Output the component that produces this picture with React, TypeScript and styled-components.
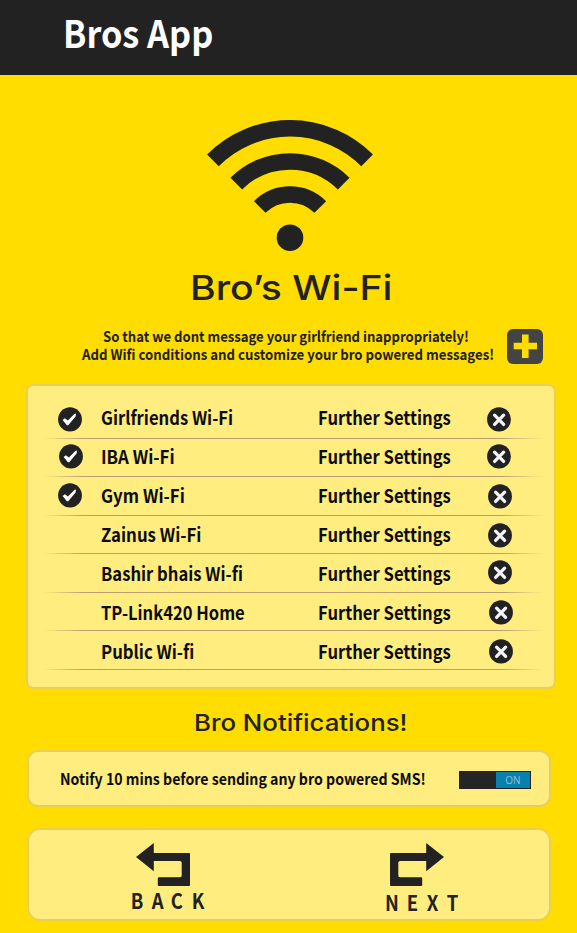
import React, { useLayoutEffect, useRef, useState } from "react";
import styled, { createGlobalStyle } from "styled-components";

const ink = "#222222";
const humanist = `"Noto Sans CJK JP", "Noto Sans", sans-serif`;

const GlobalStyle = createGlobalStyle`
  * { box-sizing: border-box; }
  html, body { margin: 0; padding: 0; }
  body { background: #ffdd00; color: ${ink}; font-family: ${humanist}; font-weight: 700; }
`;

const Screen = styled.div`
  width: 577px;
  height: 933px;
  overflow: hidden;
  background: #ffdd00;
  display: flex;
  flex-direction: column;
`;

const FitBox = styled.span<{ $width: number }>`
  display: block;
  width: ${(p) => p.$width}px;
  white-space: nowrap;
`;

const FitText = styled.span`
  display: inline-block;
  vertical-align: top;
  transform-origin: 0 50%;
`;

/* Condenses or widens its text to fill a set width. */
function Fit({ width, children }: { width: number; children: React.ReactNode }) {
  const ref = useRef<HTMLSpanElement>(null);
  const [scale, setScale] = useState(1);
  useLayoutEffect(() => {
    if (ref.current) setScale(width / ref.current.offsetWidth);
  }, [width]);
  return (
    <FitBox $width={width}>
      <FitText ref={ref} style={{ transform: `scaleX(${scale})` }}>
        {children}
      </FitText>
    </FitBox>
  );
}

const Header = styled.header`
  height: 75px;
  flex: none;
  background: ${ink};
  padding: 0 0 0 63px;
`;

const AppTitle = styled.h1`
  margin: 0;
  color: #fff;
  font-size: 38px;
  line-height: 63px;
`;

const Hero = styled.section`
  flex: none;
  height: 309px;
  padding-top: 43px;
  display: flex;
  flex-direction: column;
`;

const WifiIcon = styled.svg`
  display: block;
  flex: none;
  width: 170px;
  height: 136px;
  margin-left: 205px;
`;

const Heading = styled.h2<{ $size: number; $line: number; $left: number; $top?: number }>`
  margin: 0 0 0 ${(p) => p.$left}px;
  padding-top: ${(p) => p.$top ?? 0}px;
  font-family: Inter, sans-serif;
  font-weight: 500;
  font-size: ${(p) => p.$size}px;
  line-height: ${(p) => p.$line}px;
`;

const Intro = styled.div`
  display: flex;
  margin-top: 5px;
`;

const IntroText = styled.div`
  width: 507px;
  padding-left: 82px;
  display: flex;
  flex-direction: column;
  font-size: 14.5px;
  line-height: 18px;
`;

const FirstLine = styled.div`
  padding-left: 21px;
`;

const AddButton = styled.button`
  width: 36px;
  height: 35px;
  margin-top: 2px;
  padding: 0;
  border: 0;
  border-radius: 6px;
  background: #444444;
  svg { display: block; }
`;

const Panel = styled.section<{ $radius: number }>`
  flex: none;
  background: #ffed7f;
  border: 2px solid #ebcf52;
  border-radius: ${(p) => p.$radius}px;
`;

const NetworkPanel = styled(Panel)`
  width: 530px;
  height: 305px;
  margin-left: 26px;
  padding: 14px 12px 0 15px;
`;

const Row = styled.div<{ $height: number }>`
  height: ${(p) => p.$height}px;
  display: grid;
  grid-template-columns: 57.5px 217px 157.5px 1fr;
  background: linear-gradient(90deg, rgba(140, 105, 110, 0), rgba(140, 105, 110, 0.6) 8%, rgba(140, 105, 110, 0.6) 92%, rgba(140, 105, 110, 0))
    left bottom / 100% 1px no-repeat;
`;

const RowText = styled.div<{ $baseline: number }>`
  padding-top: ${(p) => p.$baseline - 22}px;
  font-size: 18.5px;
  line-height: 28px;
  color: #0c0c0c;
`;

const RowIcon = styled.div<{ $x: number; $y: number }>`
  padding: ${(p) => p.$y}px 0 0 ${(p) => p.$x}px;
  svg { display: block; }
`;

const NoticePanel = styled(Panel)`
  width: 524px;
  height: 57px;
  margin-left: 27px;
  display: flex;
  align-items: flex-start;
  padding: 0 18px 0 31px;
  justify-content: space-between;
`;

const NoticeText = styled.div`
  font-size: 15.5px;
  line-height: 53px;
  color: #0c0c0c;
`;

const Toggle = styled.button`
  width: 72px;
  height: 18px;
  margin-top: 19px;
  padding: 0;
  border: 1px solid ${ink};
  background: #252525;
  display: flex;
  justify-content: flex-end;
`;

const ToggleKnob = styled.span`
  width: 34px;
  height: 16px;
  background: #0a80ad;
  color: #8fc3d8;
  font: 400 10px/17px "Open Sans", sans-serif;
  text-align: center;
`;

const NavPanel = styled(Panel)`
  width: 524px;
  height: 93px;
  margin: 21px 0 0 27px;
  display: flex;
`;

const NavButton = styled.button<{ $left: number; $width: number }>`
  margin-left: ${(p) => p.$left}px;
  width: ${(p) => p.$width}px;
  padding: 13px 0 0;
  border: 0;
  background: none;
  color: ${ink};
  font: 700 21px/28px ${humanist};
  text-align: left;
  display: flex;
  flex-direction: column;
`;

const NavArrow = styled.svg<{ $left: number; $flip?: boolean }>`
  display: block;
  width: 54px;
  height: 43px;
  margin-left: ${(p) => p.$left}px;
  transform: ${(p) => (p.$flip ? "scaleX(-1)" : "none")};
`;

const NavLabel = styled.span<{ $top: number }>`
  display: flex;
  justify-content: space-between;
  width: 100%;
  margin-top: ${(p) => p.$top}px;
`;

const Letter = styled.span`
  transform: scaleX(0.88);
`;

const Check = () => (
  <svg width="24" height="25" viewBox="0 0 24 25">
    <ellipse cx="12" cy="12.4" rx="11.9" ry="12.2" fill={ink} />
    <path d="M4.6 12.9L6.9 11.3L9.9 13.6L16.3 6.9L18 6.4L17.6 9.6L10.2 18.2L8.9 18.2Z" fill="#fff" />
  </svg>
);

const Remove = () => (
  <svg width="24" height="25" viewBox="0 0 24 25">
    <ellipse cx="12" cy="12.4" rx="11.9" ry="12.2" fill={ink} />
    <path d="M7.6 8.2L16.6 17.4M16.6 8.2L7.6 17.4" stroke="#f4f4f8" strokeWidth="3.3" strokeLinecap="round" />
  </svg>
);

const Arrow = ({ left, flip }: { left: number; flip?: boolean }) => (
  <NavArrow $left={left} $flip={flip} viewBox="0 0 54 43">
    <path
      d="M0 14L17.8 0V10H53Q54 10 54 11V42Q54 43 53 43H22.8Q21.8 43 21.8 42V35.5Q21.8 34.3 23 34.3H44Q45.7 34.3 45.7 32.6V19.7Q45.7 18 44 18H17.8V28.3Z"
      fill={ink}
    />
  </NavArrow>
);

type Network = {
  name: string;
  width: number;
  height: number;
  baseline: number;
  checked?: [number, number];
  remove: [number, number];
};

const networks: Network[] = [
  { name: "Girlfriends Wi-Fi", width: 132, height: 39, baseline: 25, checked: [15, 7], remove: [12, 7] },
  { name: "IBA Wi-Fi", width: 74, height: 38, baseline: 25, checked: [16, 5], remove: [12, 5] },
  { name: "Gym Wi-Fi", width: 84, height: 39, baseline: 26, checked: [15, 6], remove: [13, 7] },
  { name: "Zainus Wi-Fi", width: 100, height: 38, baseline: 26, remove: [13, 7] },
  { name: "Bashir bhais Wi-fi", width: 142, height: 39, baseline: 27, remove: [13, 6] },
  { name: "TP-Link420 Home", width: 144, height: 38, baseline: 27, remove: [14, 7] },
  { name: "Public Wi-fi", width: 93, height: 39, baseline: 28, remove: [14, 8] },
];

export default function App() {
  return (
    <Screen>
      <GlobalStyle />
      <Header>
        <AppTitle>
          <Fit width={150}>Bros App</Fit>
        </AppTitle>
      </Header>

      <Hero>
        <WifiIcon viewBox="205 118 170 136" fill="none" stroke={ink} strokeWidth="16.5">
          <path d="M212.9 160.3A109 109 0 0 1 367.1 160.3" />
          <path d="M236.3 183.6A76 76 0 0 1 343.7 183.6" />
          <path d="M259.7 207A42.8 42.8 0 0 1 320.3 207" />
          <circle cx="290" cy="237.7" r="13.3" fill={ink} stroke="none" />
        </WifiIcon>
        <Heading $size={34.5} $line={68} $left={190}>
          <Fit width={202}>Bro’s Wi-Fi</Fit>
        </Heading>
        <Intro>
          <IntroText>
            <FirstLine>
              <Fit width={366}>So that we dont message your girlfriend inappropriately!</Fit>
            </FirstLine>
            <Fit width={412}>Add Wifi conditions and customize your bro powered messages!</Fit>
          </IntroText>
          <AddButton aria-label="Add network">
            <svg width="36" height="35" viewBox="0 0 36 35">
              <path d="M6.7 17H30M18.3 5.5V29" stroke="#ffdd00" strokeWidth="6.6" />
            </svg>
          </AddButton>
        </Intro>
      </Hero>

      <NetworkPanel $radius={7}>
        {networks.map((n) => (
          <Row key={n.name} $height={n.height}>
            <RowIcon $x={n.checked ? n.checked[0] : 0} $y={n.checked ? n.checked[1] : 0}>
              {n.checked && <Check />}
            </RowIcon>
            <RowText $baseline={n.baseline}>
              <Fit width={n.width}>{n.name}</Fit>
            </RowText>
            <RowText $baseline={n.baseline}>
              <Fit width={133}>Further Settings</Fit>
            </RowText>
            <RowIcon $x={n.remove[0]} $y={n.remove[1]}>
              <Remove />
            </RowIcon>
          </Row>
        ))}
      </NetworkPanel>

      <Heading $size={23} $line={53} $left={194} $top={8}>
        <Fit width={213}>Bro Notifications!</Fit>
      </Heading>

      <NoticePanel $radius={11}>
        <NoticeText>
          <Fit width={366}>Notify 10 mins before sending any bro powered SMS!</Fit>
        </NoticeText>
        <Toggle>
          <ToggleKnob>ON</ToggleKnob>
        </Toggle>
      </NoticePanel>

      <NavPanel $radius={13}>
        <NavButton $left={101} $width={75}>
          <Arrow left={6} />
          <NavLabel $top={0}>
            {[..."BACK"].map((c) => (
              <Letter key={c}>{c}</Letter>
            ))}
          </NavLabel>
        </NavButton>
        <NavButton $left={179} $width={75}>
          <Arrow left={6} flip />
          <NavLabel $top={2}>
            {[..."NEXT"].map((c) => (
              <Letter key={c}>{c}</Letter>
            ))}
          </NavLabel>
        </NavButton>
      </NavPanel>
    </Screen>
  );
}
